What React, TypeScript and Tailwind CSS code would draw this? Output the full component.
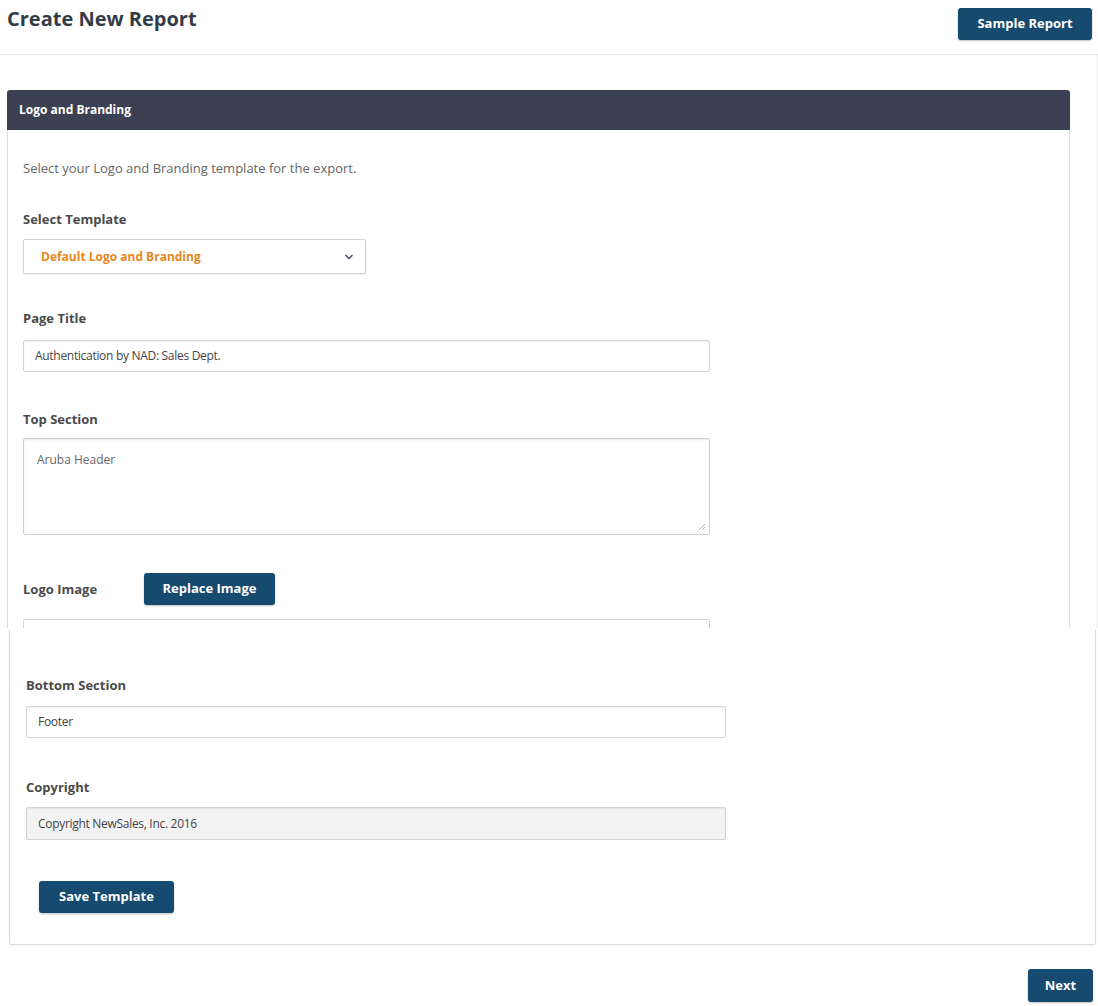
import { ChevronDown } from "lucide-react";

function Label({ children, className = "" }: { children: React.ReactNode; className?: string }) {
  return (
    <p className={`text-[13px] font-bold leading-[18px] text-[#4a4a4a] ${className}`}>{children}</p>
  );
}

function Button({ children, className = "" }: { children: React.ReactNode; className?: string }) {
  return (
    <button
      className={`rounded-[3px] bg-[#164a6f] text-[13px] font-bold text-white shadow-[0_1px_2px_rgba(0,0,0,0.25)] ${className}`}
    >
      {children}
    </button>
  );
}

function TextField({ value, className = "" }: { value: string; className?: string }) {
  return (
    <div
      className={`flex h-[32px] items-center rounded-[2px] border border-[#d4d4d4] px-[11px] text-[12px] tracking-[-0.3px] text-[#444] shadow-[inset_0_1px_2px_rgba(0,0,0,0.06)] ${className}`}
    >
      {value}
    </div>
  );
}

export default function App() {
  return (
    <div className="w-[1098px] bg-white font-['Open_Sans',sans-serif]">
      {/* Header */}
      <div className="flex h-[55px] items-start justify-between border-b border-[#e6e6e6] pl-[7px] pr-[6px]">
        <h1 className="mt-[5px] text-[20px] font-bold leading-[28px] text-[#333c46]">Create New Report</h1>
        <Button className="mt-[8px] h-[32px] w-[134px]">Sample Report</Button>
      </div>

      {/* Top part of the card */}
      <div className="border-r border-[#ececec] pt-[35px] pl-[7px] pr-[27px]">
        <div className="flex h-[40px] items-center rounded-t-[3px] bg-[#3b4053] px-[12px] text-[12px] font-bold text-white">
          Logo and Branding
        </div>
        <div className="h-[498px] overflow-hidden border-x border-[#dcdcdc] px-[15px] pt-[29px]">
          <p className="text-[13px] leading-[18px] text-[#666]">
            Select your Logo and Branding template for the export.
          </p>

          <Label className="mt-[33px]">Select Template</Label>
          <div className="mt-[11px] flex h-[35px] w-[343px] items-center justify-between rounded-[2px] border border-[#d4d4d4] pl-[17px] pr-[10px] shadow-[0_1px_2px_rgba(0,0,0,0.08)]">
            <span className="text-[12px] font-bold text-[#e8871e]">Default Logo and Branding</span>
            <ChevronDown size={12} strokeWidth={3.5} className="text-[#4b5a6b]" />
          </div>

          <Label className="mt-[35px]">Page Title</Label>
          <TextField className="mt-[13px] w-[687px]" value="Authentication by NAD: Sales Dept." />

          <Label className="mt-[38px]">Top Section</Label>
          <div className="relative mt-[10px] h-[97px] w-[687px] rounded-[2px] border border-[#cfcfcf] px-[13px] pt-[12px] text-[12px] text-[#666] shadow-[inset_0_1px_2px_rgba(0,0,0,0.08)]">
            Aruba Header
            <svg className="absolute bottom-[3px] right-[3px]" width="8" height="8" viewBox="0 0 8 8">
              <path d="M7 1 L1 7 M7 4 L4 7" stroke="#b5b5b5" strokeWidth="1" />
            </svg>
          </div>

          <div className="mt-[38px] flex items-center">
            <Label className="w-[121px]">Logo Image</Label>
            <Button className="h-[32px] w-[131px]">Replace Image</Button>
          </div>
          <div className="mt-[14px] h-[40px] w-[687px] rounded-t-[2px] border-x border-t border-[#d4d4d4]" />
        </div>
      </div>

      {/* Bottom part of the card */}
      <div className="pl-[9px] pr-[2px] pt-[2px]">
        <div className="rounded-b-[3px] border-x border-b border-[#dcdcdc] px-[16px] pt-[46px] pb-[31px] shadow-[0_1px_2px_rgba(0,0,0,0.05)]">
          <Label>Bottom Section</Label>
          <TextField className="mt-[12px] w-[700px]" value="Footer" />

          <Label className="mt-[40px]">Copyright</Label>
          <TextField className="mt-[11px] h-[33px] w-[700px] bg-[#f3f3f3]" value="Copyright NewSales, Inc. 2016" />

          <Button className="mt-[41px] ml-[13px] h-[32px] w-[135px]">Save Template</Button>
        </div>
      </div>

      <div className="flex justify-end pr-[5px] pt-[24px] pb-[5px]">
        <Button className="h-[33px] w-[65px]">Next</Button>
      </div>
    </div>
  );
}
